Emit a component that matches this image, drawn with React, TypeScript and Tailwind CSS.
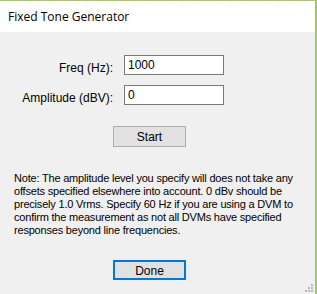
export default function App() {
  const noteLines = [
    "Note: The amplitude level you specify will does not take any",
    "offsets specified elsewhere into account. 0 dBv should be",
    "precisely 1.0 Vrms. Specify 60 Hz if you are using a DVM to",
    "confirm the measurement as not all DVMs have specified",
    "responses beyond line frequencies.",
  ];
  return (
    <div className="w-[317px] h-[294px] flex flex-col bg-[#f0f0f0] border-r-2 border-[#9fd13f] font-['Liberation_Sans',Arial,sans-serif] text-[11px] text-black overflow-hidden">
      <div className="h-px w-full bg-[repeating-linear-gradient(90deg,#9fd13f_0px,#9fd13f_9px,#b8b8b8_9px,#b8b8b8_12px)]" />
      <div className="h-[31px] bg-white flex items-center pl-2 font-['Open_Sans',sans-serif] text-[12px]">
        Fixed Tone Generator
      </div>
      <div className="flex-1 flex flex-col relative">
        <div className="mt-[23px] grid grid-cols-[113px_100px] gap-x-[11px] gap-y-[10px] items-start">
          <label className="text-right text-[12px] leading-[14px] pt-[6px]">Freq (Hz):</label>
          <div className="h-5 bg-white border border-[#7a7a7a] px-[3px] flex items-center text-[12px]">1000</div>
          <label className="text-right text-[12px] leading-[14px] pt-[6px]">Amplitude (dBV):</label>
          <div className="h-5 bg-white border border-[#7a7a7a] px-[3px] flex items-center text-[12px]">0</div>
        </div>
        <div className="mt-[21px] pl-[113px]">
          <button className="w-[73px] h-[21px] bg-[#e1e1e1] border border-[#adadad] text-[12px]">Start</button>
        </div>
        <div className="mt-[25px] pl-[14px] leading-[13px] text-[11px] tracking-[-0.2px]">
          {noteLines.map((l) => (
            <div key={l} className="whitespace-nowrap">{l}</div>
          ))}
        </div>
        <div className="mt-[23px] pl-[113px]">
          <button className="w-[73px] h-[20px] bg-[#e1e1e1] border-2 border-[#0078d7] text-[12px]">Done</button>
        </div>
        <div className="absolute right-[2px] bottom-[2px] grid grid-cols-3 gap-px">
          <span className="w-[2px] h-[2px]" />
          <span className="w-[2px] h-[2px]" />
          <span className="w-[2px] h-[2px] bg-[#b8b8b8]" />
          <span className="w-[2px] h-[2px]" />
          <span className="w-[2px] h-[2px] bg-[#b8b8b8]" />
          <span className="w-[2px] h-[2px] bg-[#b8b8b8]" />
          <span className="w-[2px] h-[2px] bg-[#b8b8b8]" />
          <span className="w-[2px] h-[2px] bg-[#b8b8b8]" />
          <span className="w-[2px] h-[2px] bg-[#b8b8b8]" />
        </div>
      </div>
    </div>
  );
}
